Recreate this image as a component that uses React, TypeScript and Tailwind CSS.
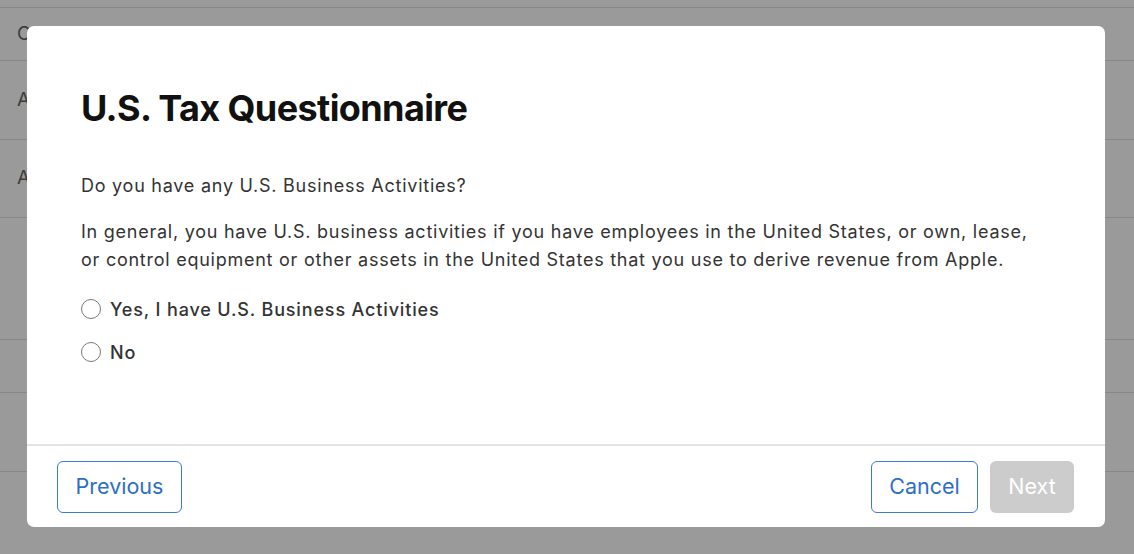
import React from "react";

const rows = [
  { h: 8, t: "" },
  { h: 53, t: "C" },
  { h: 79, t: "A" },
  { h: 78, t: "A" },
  { h: 122, t: "" },
  { h: 53, t: "" },
  { h: 79, t: "" },
];

export default function App() {
  return (
    <div
      className="relative w-[1134px] h-[554px] overflow-hidden bg-[#9a9a9a]"
      style={{ fontFamily: "Inter, 'Liberation Sans', sans-serif" }}
    >
      <div className="flex flex-col">
        {rows.map((r, i) => (
          <div
            key={i}
            className="flex items-center border-b border-[#878787] pl-[17px] text-[19px] text-[#3c3c3c]"
            style={{ height: r.h }}
          >
            {r.t}
          </div>
        ))}
      </div>

      <div className="absolute left-[27px] top-[26px] w-[1078px] h-[501px] bg-white rounded-[7px] flex flex-col">
        <div className="flex-1 px-[54px] pt-[60px]">
          <h1 className="text-[36px] leading-[44px] font-bold text-[#111] tracking-[-0.6px]">
            U.S. Tax Questionnaire
          </h1>
          <p className="mt-[42px] text-[18px] leading-[28px] text-[#333] tracking-[0.75px]">
            Do you have any U.S. Business Activities?
          </p>
          <p className="mt-[18px] text-[18px] leading-[28px] text-[#333] tracking-[0.75px] whitespace-nowrap">
            In general, you have U.S. business activities if you have employees in the United States, or own, lease,
            <br />
            or control equipment or other assets in the United States that you use to derive revenue from Apple.
          </p>
          <div className="mt-[21px] flex flex-col gap-[15px]">
            {["Yes, I have U.S. Business Activities", "No"].map((l) => (
              <label
                key={l}
                className="flex items-center h-[28px] text-[18px] font-medium text-[#333] tracking-[0.85px]"
              >
                <span className="w-[20px] h-[20px] rounded-full border-[1.5px] border-[#7a7a7a] bg-white mr-[9px]" />
                {l}
              </label>
            ))}
          </div>
        </div>
        <div className="h-[2px] bg-[#e3e3e3]" />
        <div className="h-[81px] flex items-center justify-between pl-[30px] pr-[31px]">
          <button className="h-[52px] w-[125px] rounded-[6px] border-[1.5px] border-[#3a7bd5] text-[#2d6ec8] text-[21.5px] bg-white">
            Previous
          </button>
          <div className="flex items-center gap-[12px]">
            <button className="h-[52px] w-[107px] rounded-[6px] border-[1.5px] border-[#3a7bd5] text-[#2d6ec8] text-[21.5px] bg-white">
              Cancel
            </button>
            <button className="h-[52px] w-[84px] rounded-[6px] bg-[#cccccc] text-white text-[21.5px]">
              Next
            </button>
          </div>
        </div>
      </div>
    </div>
  );
}
